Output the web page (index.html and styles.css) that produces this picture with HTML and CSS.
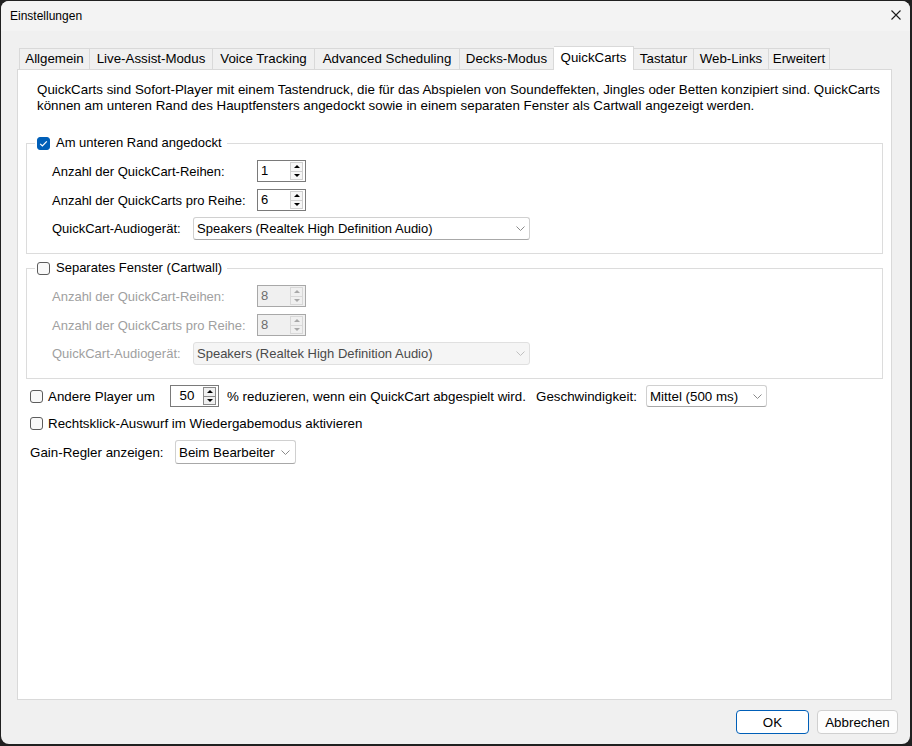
FILE: index.html
```html
<!DOCTYPE html>
<html lang="de">
<head>
<meta charset="utf-8">
<title>Einstellungen</title>
<link rel="stylesheet" href="styles.css">
</head>
<body>
<div class="window">
  <div class="titlebar">
    <span class="title">Einstellungen</span>
    <svg class="close" width="10" height="10" viewBox="0 0 10 10"><path d="M0.5 0.5 L9.5 9.5 M9.5 0.5 L0.5 9.5" stroke="#1a1a1a" stroke-width="1.1" fill="none"/></svg>
  </div>
  <div class="main">
    <div class="tabs">
      <div class="tab">Allgemein</div>
      <div class="tab">Live-Assist-Modus</div>
      <div class="tab">Voice Tracking</div>
      <div class="tab">Advanced Scheduling</div>
      <div class="tab">Decks-Modus</div>
      <div class="tab active">QuickCarts</div>
      <div class="tab">Tastatur</div>
      <div class="tab">Web-Links</div>
      <div class="tab">Erweitert</div>
    </div>
    <div class="panel">
      <p class="desc">QuickCarts sind Sofort-Player mit einem Tastendruck, die für das Abspielen von Soundeffekten, Jingles oder Betten konzipiert sind. QuickCarts<br>können am unteren Rand des Hauptfensters angedockt sowie in einem separaten Fenster als Cartwall angezeigt werden.</p>

      <fieldset class="group">
        <legend><span class="cb checked"><svg width="13" height="13" viewBox="0 0 13 13"><path d="M3.2 6.8 L5.4 9 L9.8 4.4" stroke="#fff" stroke-width="1.2" fill="none"/></svg></span>Am unteren Rand angedockt</legend>
        <div class="fields">
          <div class="row"><span class="lbl w-spin">Anzahl der QuickCart-Reihen:</span>
            <div class="spin"><span class="spin-val">1</span><span class="spin-btns"><span class="sb up"></span><span class="sb down"></span></span></div></div>
          <div class="row"><span class="lbl w-spin">Anzahl der QuickCarts pro Reihe:</span>
            <div class="spin"><span class="spin-val">6</span><span class="spin-btns"><span class="sb up"></span><span class="sb down"></span></span></div></div>
          <div class="row row-combo"><span class="lbl w-combo">QuickCart-Audiogerät:</span>
            <div class="combo wide"><span>Speakers (Realtek High Definition Audio)</span><svg width="9" height="5" viewBox="0 0 9 5"><path d="M0.5 0.5 L4.5 4.5 L8.5 0.5" stroke="#8a8a8a" fill="none"/></svg></div></div>
        </div>
      </fieldset>

      <fieldset class="group second">
        <legend><span class="cb"></span>Separates Fenster (Cartwall)</legend>
        <div class="fields disabled">
          <div class="row"><span class="lbl w-spin">Anzahl der QuickCart-Reihen:</span>
            <div class="spin off"><span class="spin-val">8</span><span class="spin-btns"><span class="sb up"></span><span class="sb down"></span></span></div></div>
          <div class="row"><span class="lbl w-spin">Anzahl der QuickCarts pro Reihe:</span>
            <div class="spin off"><span class="spin-val">8</span><span class="spin-btns"><span class="sb up"></span><span class="sb down"></span></span></div></div>
          <div class="row row-combo"><span class="lbl w-combo">QuickCart-Audiogerät:</span>
            <div class="combo wide off"><span>Speakers (Realtek High Definition Audio)</span><svg width="9" height="5" viewBox="0 0 9 5"><path d="M0.5 0.5 L4.5 4.5 L8.5 0.5" stroke="#c0c0c0" fill="none"/></svg></div></div>
        </div>
      </fieldset>

      <div class="opt opt-player">
        <span class="cb"></span><span class="opt-lbl w-player">Andere Player um</span>
        <div class="spin center"><span class="spin-val">50</span><span class="spin-btns dark"><span class="sb up"></span><span class="sb down"></span></span></div>
        <span class="w-reduce">% reduzieren, wenn ein QuickCart abgespielt wird.</span>
        <span class="w-speed">Geschwindigkeit:</span>
        <div class="combo speed"><span>Mittel (500 ms)</span><svg width="9" height="5" viewBox="0 0 9 5"><path d="M0.5 0.5 L4.5 4.5 L8.5 0.5" stroke="#8a8a8a" fill="none"/></svg></div>
      </div>
      <div class="opt opt-eject">
        <span class="cb"></span><span class="opt-lbl">Rechtsklick-Auswurf im Wiedergabemodus aktivieren</span>
      </div>
      <div class="opt opt-gain">
        <span class="w-gain">Gain-Regler anzeigen:</span>
        <div class="combo gain"><span>Beim Bearbeiter</span><svg width="9" height="5" viewBox="0 0 9 5"><path d="M0.5 0.5 L4.5 4.5 L8.5 0.5" stroke="#8a8a8a" fill="none"/></svg></div>
      </div>
    </div>
    <div class="footer">
      <button class="btn primary ok">OK</button>
      <button class="btn cancel">Abbrechen</button>
    </div>
  </div>
</div>
</body>
</html>
```
FILE: styles.css
```css
html, body {
  margin: 0;
}
body {
  padding: 1px;
  background: #202020;
  font-family: "Liberation Sans", Arial, sans-serif;
  font-size: 13px;
  color: #000;
}
.window {
  width: 909px;
  height: 743px;
  background: #f0f0f0;
  border-radius: 8px;
  overflow: hidden;
  display: flex;
  flex-direction: column;
}
.titlebar {
  height: 30px;
  flex: none;
  background: #f3f3f3;
  display: flex;
  align-items: center;
  justify-content: space-between;
  padding: 0 9px;
  font-size: 12px;
}
.close {
  display: block;
  margin-top: -2px;
}
.main {
  flex: 1;
  display: flex;
  flex-direction: column;
  padding: 15px 0 0 16px;
}

/* tabs */
.tabs {
  display: flex;
  align-items: flex-end;
  height: 23px;
  margin-left: 2px;
}
.tab {
  box-sizing: border-box;
  height: 21px;
  line-height: 20px;
  font-size: 13.3px;
  text-align: center;
  white-space: nowrap;
  background: #f0f0f0;
  border: 1px solid #d9d9d9;
  border-left: none;
  border-bottom: none;
}
.tab:nth-child(1) { width: 71px; border-left: 1px solid #d9d9d9; }
.tab:nth-child(2) { width: 123px; }
.tab:nth-child(3) { width: 102px; }
.tab:nth-child(4) { width: 145px; }
.tab:nth-child(5) { width: 94px; }
.tab:nth-child(6) { width: 80px; }
.tab:nth-child(7) { width: 60px; }
.tab:nth-child(8) { width: 75px; }
.tab:nth-child(9) { width: 61px; }
.tab.active {
  height: 24px;
  line-height: 21px;
  margin-bottom: -1px;
  background: #fff;
  position: relative;
  z-index: 1;
}

/* panel */
.panel {
  box-sizing: border-box;
  width: 875px;
  height: 631px;
  flex: none;
  background: #fff;
  border: 1px solid #d9d9d9;
  padding: 12px 8px 0 8px;
}
.desc {
  margin: 0 0 0 11px;
  line-height: 16px;
  font-size: 13.35px;
  white-space: nowrap;
}

/* group boxes */
.group {
  margin: 21px 0 0 0;
  padding: 0 0 13px 8px;
  border: 1px solid #dcdcdc;
  min-width: 0;
}
.group.second {
  margin-top: 6px;
}
.group legend {
  display: flex;
  align-items: center;
  gap: 6px;
  height: 16px;
  line-height: 16px;
  padding: 0 5px 0 2px;
}
.fields {
  display: flex;
  flex-direction: column;
  gap: 7px;
  padding: 9px 0 0 17px;
}
.row {
  display: flex;
  align-items: center;
}
.row-combo {
  margin-top: -1px;
}
.lbl.w-spin { width: 205px; }
.lbl.w-combo { width: 141px; }
.fields.disabled .lbl { color: #a0a0a0; }

/* checkbox */
.cb {
  box-sizing: border-box;
  width: 13px;
  height: 13px;
  flex: none;
  border: 1px solid #5c5c5c;
  border-radius: 3px;
  background: #f9f9f9;
  display: inline-block;
}
.cb.checked {
  border-color: #005fb8;
  background: #005fb8;
}
.cb.checked svg {
  display: block;
  margin: -1px 0 0 -1px;
}

/* spin box */
.spin {
  box-sizing: border-box;
  width: 49px;
  height: 22px;
  flex: none;
  border: 1px solid #7a7a7a;
  background: #fff;
  display: flex;
  align-items: center;
  padding: 1px 2px 1px 0;
}
.spin-val {
  flex: 1;
  padding-left: 3px;
  line-height: 18px;
}
.spin.center .spin-val {
  text-align: center;
  padding-left: 0;
}
.spin-btns {
  box-sizing: border-box;
  width: 13px;
  height: 18px;
  border: 1px solid #cfcfcf;
  background: #f7f7f7;
  display: flex;
  flex-direction: column;
}
.spin-btns.dark {
  border-color: #8a8a8a;
  background: #f0f0f0;
}
.sb {
  flex: 1;
  display: flex;
  align-items: center;
  justify-content: center;
}
.sb + .sb {
  border-top: 1px solid #cfcfcf;
}
.spin-btns.dark .sb + .sb {
  border-top-color: #8a8a8a;
}
.sb.up::before {
  content: "";
  border-left: 3px solid transparent;
  border-right: 3px solid transparent;
  border-bottom: 3px solid #000;
}
.sb.down::before {
  content: "";
  border-left: 3px solid transparent;
  border-right: 3px solid transparent;
  border-top: 3px solid #000;
}
.spin.off {
  background: #f0f0f0;
  border-color: #a8a8a8;
  color: #6d6d6d;
}
.spin.off .spin-btns {
  background: #f0f0f0;
  border-color: #d8d8d8;
}
.spin.off .sb + .sb { border-top-color: #d8d8d8; }
.spin.off .sb.up::before { border-bottom-color: #a8a8a8; }
.spin.off .sb.down::before { border-top-color: #a8a8a8; }

/* combo box */
.combo {
  box-sizing: border-box;
  height: 23px;
  flex: none;
  border: 1px solid #d0d0d0;
  border-bottom-color: #a8a8a8;
  border-radius: 3px;
  background: #fff;
  display: flex;
  align-items: center;
  justify-content: space-between;
  padding: 0 4px 0 3px;
  white-space: nowrap;
}
.combo svg { display: block; flex: none; }
.combo.wide { width: 337px; }
.combo.off {
  background: #f5f5f5;
  border-color: #e0e0e0;
  color: #4a4a4a;
}
.combo.speed { width: 121px; height: 22px; }
.combo.gain { width: 121px; height: 24px; padding-right: 5px; }

/* lower options */
.opt {
  display: flex;
  align-items: center;
  margin-left: 4px;
  white-space: nowrap;
  font-size: 13.35px;
}
.opt-lbl { margin-left: 5px; }
.opt-player { margin-top: 6px; height: 22px; }
.opt-eject { margin-top: 8px; height: 16px; }
.opt-gain { margin-top: 9px; height: 24px; }
.w-player { width: 122px; }
.w-reduce { width: 309px; margin-left: 8px; }
.w-speed { width: 110px; }
.w-gain { width: 145px; }

/* footer */
.footer {
  display: flex;
  justify-content: flex-end;
  gap: 8px;
  padding: 10px 12px 0 0;
}
.btn {
  box-sizing: border-box;
  height: 24px;
  padding: 0;
  font-family: "Liberation Sans", Arial, sans-serif;
  font-size: 13.35px;
  color: #000;
  background: #fdfdfd;
  border: 1px solid #d0d0d0;
  border-radius: 4px;
}
.btn.primary {
  background: #fff;
  border-color: #005fb8;
}
.btn.ok { width: 73px; }
.btn.cancel { width: 81px; }
```
